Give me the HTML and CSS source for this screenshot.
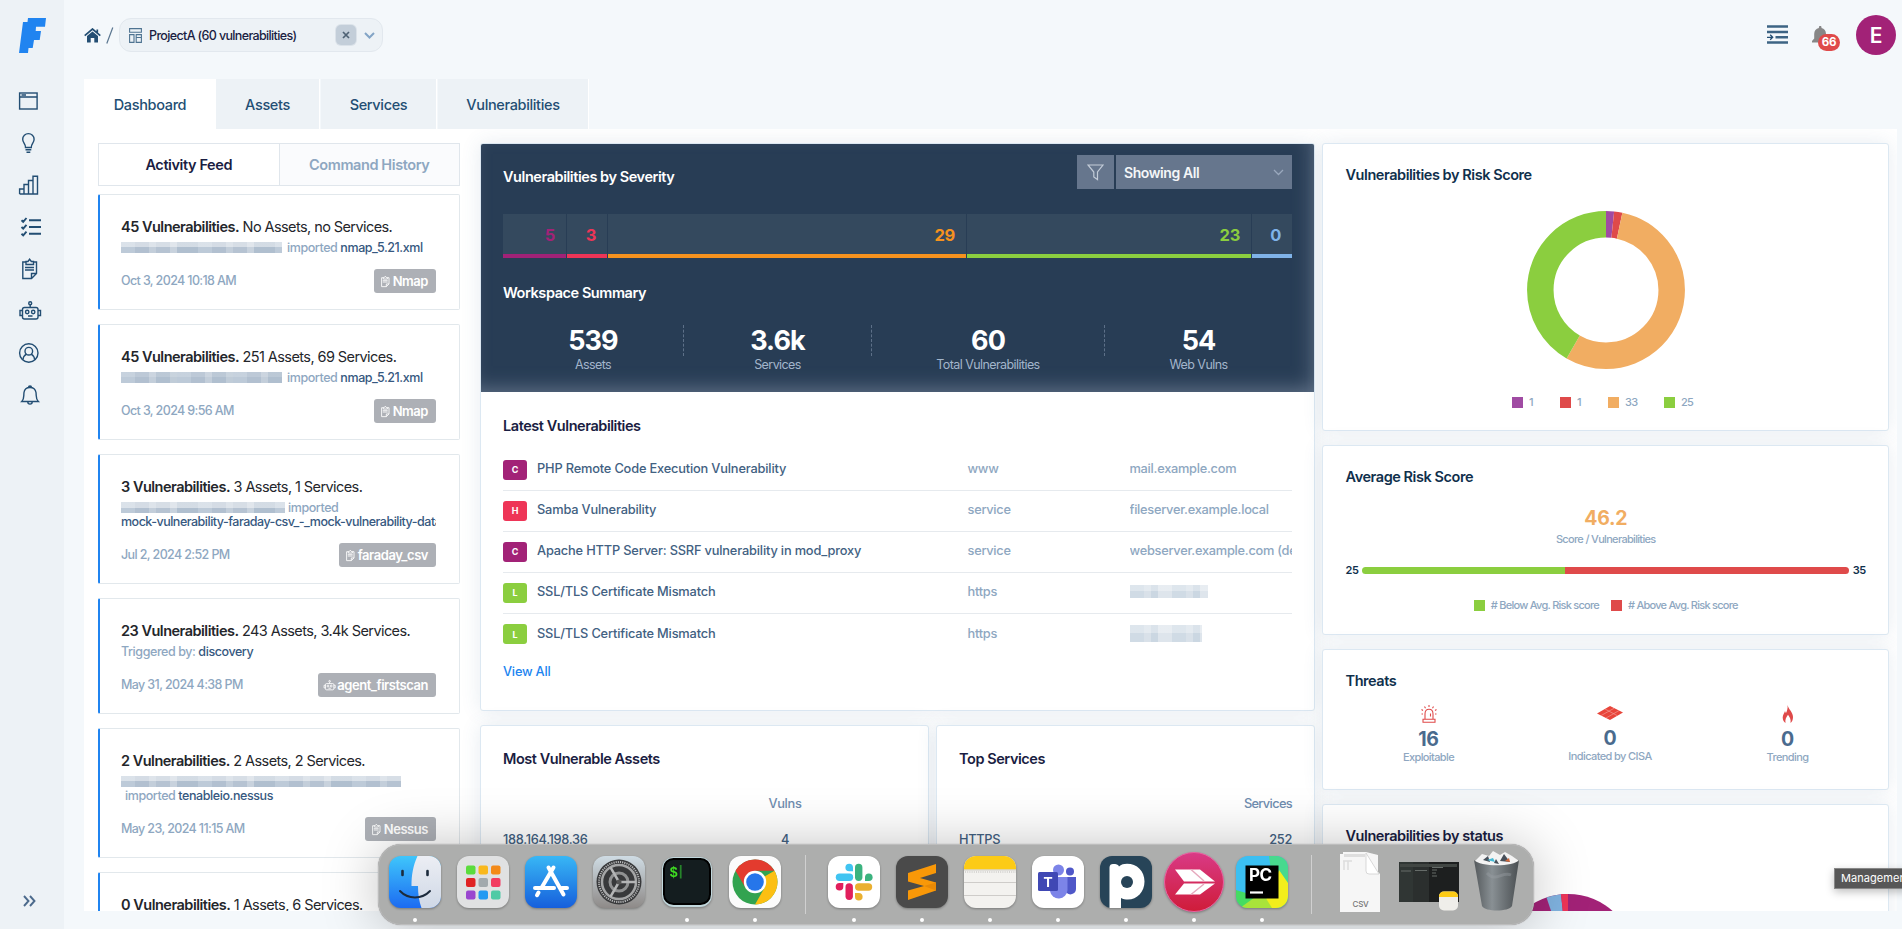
FILE: index.html
```html
<!DOCTYPE html>
<html lang="en">
<head>
<meta charset="utf-8">
<title>Faraday Dashboard</title>
<link rel="stylesheet" href="styles.css">
</head>
<body>
<svg class="defs" width="0" height="0">
  <defs>
    <symbol id="clip" viewBox="0 0 24 24"><path d="M8 5H4.800V21.500H13.500L18.500 16.500V5H15.500M13.500 21.500V16.500H18.500M8 7.500V4.500H10L11.600 2.200L13.300 4.500H15.500V7.500ZM7 10.500H16M7 13H16"/></symbol>
    <symbol id="bot" viewBox="0 0 24 24"><rect x="4.500" y="8.500" width="15.500" height="11.500" rx="2"/><path d="M12.200 8.500V6M4.500 11.500H2V16.500H4.500M20 11.500H22.500V16.500H20M10 17H14.500"/><circle cx="12.200" cy="4.200" r="1.500"/><circle cx="9.200" cy="13" r="1.700"/><circle cx="15.200" cy="13" r="1.700"/></symbol>
  </defs>
</svg>
<div class="app">
  <aside class="sidebar">
    <svg class="logo" width="27" height="35" viewBox="0 0 27 35"><path d="M9 0H27L26 8.700H17L16.700 13H22L20.700 22H15L13.700 30H9.500L9 35H0L4 4H8.500Z" fill="#2084f0"/></svg>
    <nav class="side-nav">
      <svg class="si" viewBox="0 0 24 24"><rect x="1.600" y="4" width="17.500" height="16"/><path d="M1.600 8H19.100M3.500 6H8" /></svg>
      <svg class="si" viewBox="0 0 24 24"><path d="M7.500 16.500C7.500 12.500 4.700 12 4.700 8.300A5.700 5.700 0 0 1 16.100 8.300C16.100 12 13.300 12.500 13.300 16.500ZM7.500 18.800H13.300M8.500 21.200H12.300"/></svg>
      <svg class="si" viewBox="0 0 24 24"><path d="M1.600 21V16H6V21M6 21V11.500H10.500V21M10.500 21V7.500H15V21M15 21V3.200H19.500V21ZM1.600 21H15"/></svg>
      <svg class="si" viewBox="0 0 24 24"><path d="M11 5.200H23M11 12H23M11 18.800H23M3.500 5.200L5.200 6.800L8.500 3M3.500 12L5.200 13.600L8.500 9.800M3.500 18.800L5.200 20.400L8.500 16.600" stroke-width="1.900"/></svg>
      <svg class="si"><use href="#clip"/></svg>
      <svg class="si"><use href="#bot"/></svg>
      <svg class="si" viewBox="0 0 24 24"><circle cx="10.800" cy="12" r="9.200"/><circle cx="10.800" cy="10.200" r="3.800"/><path d="M4.900 18.800C5.200 15.500 7 14 8.500 13.200M16.700 18.800C16.400 15.500 14.600 14 13.100 13.200"/></svg>
      <svg class="si" viewBox="0 0 24 24"><path d="M3.800 18.500C6.500 16 5.500 13 6 9.500C6.400 6.500 8.500 4.500 12 4.500C15.500 4.500 17.500 6.500 18 9.500C18.500 13 17.500 16 20.300 18.500ZM10.500 4.500C10.500 2.500 13.500 2.500 13.500 4.500M9.800 19C9.800 21.800 14.200 21.800 14.200 19"/></svg>
    </nav>
    <svg class="expand" width="13" height="12" viewBox="0 0 13 12"><path d="M1 1L5.500 6L1 11M7 1L11.500 6L7 11"/></svg>
  </aside>

  <main class="main">
    <header class="topbar">
      <svg class="home" width="17" height="15" viewBox="0 0 17 15"><path d="M.7 7.700L8.500 1L16.300 7.700M13.300 1.500V4.500" fill="none" stroke="#234e73" stroke-width="1.700"/><path d="M3 8L8.500 3.400L14 8V14.500H10.300V10H6.700V14.500H3Z" fill="#234e73"/></svg>
      <svg class="slash" width="8" height="17" viewBox="0 0 8 17"><path d="M.8 16.500L6.800.5" stroke="#5a7690" stroke-width="1.200"/></svg>
      <div class="picker">
        <svg width="13" height="15" viewBox="0 0 13 15"><path d="M.6.600H12.400V4.200H.6ZM.6 6.600H5V14.400H.6ZM7.200 14.400V9.500H12.400V14.400ZM7.200 9.500V6.600H12.400V9.500" fill="none" stroke="#4e7391" stroke-width="1.100"/></svg>
        <span class="t-project">ProjectA (60 vulnerabilities)</span>
        <span class="clear"><svg width="8" height="8" viewBox="0 0 8 8"><path d="M1 1L7 7M7 1L1 7" stroke="#4f6274" stroke-width="1.700"/></svg></span>
        <svg width="11" height="7" viewBox="0 0 11 7"><path d="M1 1L5.500 5.500L10 1" fill="none" stroke="#83a4c6" stroke-width="2"/></svg>
      </div>
      <div class="tools">
        <svg class="indent" width="21" height="19" viewBox="0 0 21 19"><path d="M0 1.500H21M0 7H21M8.500 12.300H21M0 17.500H21" stroke="#3d6484" stroke-width="2.400"/><path d="M0 12.300H5.500M3.200 9.800L5.700 12.300L3.200 14.800" fill="none" stroke="#234e73" stroke-width="1.300"/></svg>
        <div class="bellwrap">
          <svg width="16" height="17" viewBox="0 0 16 17"><path d="M0 16.500V15L2.200 12.500V8C2.200 4.500 4 2.600 6.900 2V1.200A1.300 1.300 0 0 1 9.500 1.200V2C12.300 2.600 14 4.500 14 8V12.500L16 15V16.500Z" fill="#878787"/></svg>
          <span class="badge">66</span>
        </div>
        <span class="avatar">E</span>
      </div>
    </header>

    <nav class="tabs">
      <span class="tab on">Dashboard</span><span class="tab t2">Assets</span><span class="tab t3">Services</span><span class="tab t4">Vulnerabilities</span>
    </nav>

    <section class="board">
      <div class="feed">
        <div class="feed-tabs"><span class="ft on">Activity Feed</span><span class="ft">Command History</span></div>
        <article class="item">
          <p class="it"><b>45 Vulnerabilities.</b> No Assets, no Services.</p>
          <p class="by"><i class="px w1"></i><span>imported</span> <em>nmap_5.21.xml</em></p>
          <div class="foot"><span>Oct 3, 2024 10:18 AM</span><span class="tag"><svg><use href="#clip"/></svg>Nmap</span></div>
        </article>
        <article class="item">
          <p class="it"><b>45 Vulnerabilities.</b> 251 Assets, 69 Services.</p>
          <p class="by"><i class="px w1 dim"></i><span>imported</span> <em>nmap_5.21.xml</em></p>
          <div class="foot"><span>Oct 3, 2024 9:56 AM</span><span class="tag"><svg><use href="#clip"/></svg>Nmap</span></div>
        </article>
        <article class="item tall">
          <p class="it"><b>3 Vulnerabilities.</b> 3 Assets, 1 Services.</p>
          <p class="by"><i class="px w2"></i><span>imported</span><br><em class="long">mock-vulnerability-faraday-csv_-_mock-vulnerability-data</em></p>
          <div class="foot"><span>Jul 2, 2024 2:52 PM</span><span class="tag"><svg><use href="#clip"/></svg>faraday_csv</span></div>
        </article>
        <article class="item">
          <p class="it"><b>23 Vulnerabilities.</b> 243 Assets, 3.4k Services.</p>
          <p class="by"><span>Triggered by:</span> <em>discovery</em></p>
          <div class="foot"><span>May 31, 2024 4:38 PM</span><span class="tag"><svg><use href="#bot"/></svg>agent_firstscan</span></div>
        </article>
        <article class="item tall">
          <p class="it"><b>2 Vulnerabilities.</b> 2 Assets, 2 Services.</p>
          <p class="by"><i class="px w3"></i><br><span class="ind">imported</span> <em>tenableio.nessus</em></p>
          <div class="foot"><span>May 23, 2024 11:15 AM</span><span class="tag"><svg><use href="#clip"/></svg>Nessus</span></div>
        </article>
        <article class="item">
          <p class="it"><b>0 Vulnerabilities.</b> 1 Assets, 6 Services.</p>
        </article>
      </div>

      <div class="center">
        <section class="card sev-card">
          <div class="dark">
            <div class="dark-head">
              <h2>Vulnerabilities by Severity</h2>
              <div class="filter">
                <span class="funnel"><svg width="17" height="17" viewBox="0 0 17 17"><path d="M1 1H16L10.500 8V15.500L6.800 13V8Z" fill="none" stroke="#c3ccd8" stroke-width="1.200"/></svg></span>
                <span class="select">Showing All<svg width="11" height="7" viewBox="0 0 11 7"><path d="M1 1L5.500 5.500L10 1" fill="none" stroke="#9aa8bd" stroke-width="1.300"/></svg></span>
              </div>
            </div>
            <div class="sev">
              <span class="crit">5</span><span class="high">3</span><span class="med">29</span><span class="low">23</span><span class="info">0</span>
            </div>
            <h2 class="ws">Workspace Summary</h2>
            <div class="summary">
              <div class="s1"><b>539</b><span>Assets</span></div>
              <div class="s2"><b>3.6k</b><span>Services</span></div>
              <div class="s3"><b>60</b><span>Total Vulnerabilities</span></div>
              <div class="s4"><b>54</b><span>Web Vulns</span></div>
            </div>
          </div>
          <div class="latest">
            <h2>Latest Vulnerabilities</h2>
            <div class="row"><i class="sq c">C</i><span class="name">PHP Remote Code Execution Vulnerability</span><span>www</span><span class="host">mail.example.com</span></div>
            <div class="row"><i class="sq h">H</i><span class="name">Samba Vulnerability</span><span>service</span><span class="host">fileserver.example.local</span></div>
            <div class="row"><i class="sq c">C</i><span class="name">Apache HTTP Server: SSRF vulnerability in mod_proxy</span><span>service</span><span class="host">webserver.example.com (default)</span></div>
            <div class="row"><i class="sq l">L</i><span class="name">SSL/TLS Certificate Mismatch</span><span>https</span><span class="host"><i class="mosaic m1"></i></span></div>
            <div class="row last"><i class="sq l">L</i><span class="name">SSL/TLS Certificate Mismatch</span><span>https</span><span class="host"><i class="mosaic m2"></i></span></div>
            <a class="view">View All</a>
          </div>
        </section>
        <div class="pair">
          <section class="card mva">
            <h2>Most Vulnerable Assets</h2>
            <div class="mrow head"><span></span><span>Vulns</span></div>
            <div class="mrow"><span>188.164.198.36</span><span>4</span></div>
          </section>
          <section class="card top-s">
            <h2>Top Services</h2>
            <div class="trow head"><span></span><span class="sv">Services</span></div>
            <div class="trow"><span>HTTPS</span><span>252</span></div>
          </section>
        </div>
      </div>

      <div class="right">
        <section class="card risk">
          <h2>Vulnerabilities by Risk Score</h2>
          <svg class="donut" width="158" height="158" viewBox="-79 -79 158 158">
            <g fill="none" stroke-width="26.500" transform="rotate(-90)">
              <circle r="65.700" pathLength="60" stroke="#a04ba3" stroke-dasharray="1 59"/>
              <circle r="65.700" pathLength="60" stroke="#df4a4a" stroke-dasharray="1 59" stroke-dashoffset="-1"/>
              <circle r="65.700" pathLength="60" stroke="#f1ad62" stroke-dasharray="33 27" stroke-dashoffset="-2"/>
              <circle r="65.700" pathLength="60" stroke="#8bce3f" stroke-dasharray="25 35" stroke-dashoffset="-35"/>
            </g>
          </svg>
          <div class="legend"><span class="k1"><i class="purple"></i>1</span><span class="k1"><i class="red"></i>1</span><span class="k2"><i class="orange"></i>33</span><span class="k3"><i class="green"></i>25</span></div>
        </section>
        <section class="card avg">
          <h2>Average Risk Score</h2>
          <b class="score">46.2</b>
          <span class="score-l">Score / Vulnerabilities</span>
          <div class="meter"><b>25</b><div class="track"><i class="below"></i><i class="above"></i></div><b>35</b></div>
          <div class="legend2"><i class="green"></i><span># Below Avg. Risk score</span><i class="red"></i><span># Above Avg. Risk score</span></div>
        </section>
        <section class="card threats">
          <h2>Threats</h2>
          <div class="trio">
            <div class="th1"><svg width="16" height="18" viewBox="0 0 16 18"><path d="M4 14V9C4 5.500 5.500 4.300 8 4.300C10.500 4.300 12 5.500 12 9V14M2 17.300V14.300H14V17.300ZM8 0V2M3.500 1.500L4.500 3.200M12.500 1.500L11.500 3.200M.5 4.500L2 5.500M15.500 4.500L14 5.500M.5 9H2M14 9H15.500M9.500 8.500V11.500" fill="none" stroke="#df4a4a" stroke-width="1.100"/></svg><b>16</b><span>Exploitable</span></div>
            <div class="th2"><svg width="26" height="14" viewBox="0 0 26 14"><path d="M13 0L26 6.500L13 14L0 7.500Z" fill="#e8453a"/><path d="M4 9.600L17 2.300M9 12L22 4.600M8 3L20 9.500" stroke="#f5a59f" stroke-width=".6"/></svg><b>0</b><span>Indicated by CISA</span></div>
            <div class="th3"><svg width="12" height="18" viewBox="0 0 12 18"><path d="M5.500 0C6.500 4.500 11 7 11 12C11 15 10 17 8.500 18C9.300 14.500 7.500 12 6 9.800C4.500 12 2.800 14.500 3.500 18C1.800 17 .7 15 .7 12.500C.7 10 2.500 8 3 6C3.300 7 3.600 7.600 4 8C5 6 6 3.500 5.500 0Z" fill="#df4a4a"/></svg><b>0</b><span>Trending</span></div>
          </div>
        </section>
        <section class="card status">
          <h2>Vulnerabilities by status</h2>
          <svg class="pie" width="134" height="134" viewBox="-67 -67 134 134"><circle r="67" fill="#a22277"/><path d="M0 0L-21.500 -63.500A67 67 0 0 1 -7 -66.700Z" fill="#80b3e0"/><path d="M0 0L-7 -66.700A67 67 0 0 1 0 -67Z" fill="#ee3557"/></svg>
        </section>
      </div>
    </section>
  </main>
</div>

<span class="tooltip">Management</span>

<div class="dock">
  <div class="app-i on"><svg viewBox="0 0 52 52"><defs><linearGradient id="gf" x2="0" y2="1"><stop stop-color="#3fc6fb"/><stop offset="1" stop-color="#1c6bf2"/></linearGradient><linearGradient id="gw" x2="0" y2="1"><stop stop-color="#eceef4"/><stop offset="1" stop-color="#cfd8e6"/></linearGradient></defs><rect width="52" height="52" rx="12" fill="url(#gf)"/><path d="M28.500 0C24 10 22.500 19 22.500 30H29C29 38 30 45 32.500 52H40A12 12 0 0 0 52 40V12A12 12 0 0 0 40 0Z" fill="url(#gw)"/><path d="M13.500 15V19M38.500 15V19" stroke="#1c2b3c" stroke-width="2.600" stroke-linecap="round"/><path d="M11 35C19 43.500 33 43.500 41 35" fill="none" stroke="#1c2b3c" stroke-width="2" stroke-linecap="round"/></svg></div>
  <div class="app-i"><svg viewBox="0 0 52 52"><rect width="52" height="52" rx="12" fill="#e0e1e2"/><g><rect x="9" y="9.500" width="9.500" height="9" rx="2" fill="#5bdc3c"/><rect x="21.500" y="9.500" width="9.500" height="9" rx="2" fill="#f9b81c"/><rect x="34" y="9.500" width="9.500" height="9" rx="2" fill="#f38a18"/><rect x="9" y="22" width="9.500" height="9" rx="2" fill="#e02323"/><rect x="21.500" y="22" width="9.500" height="9" rx="2" fill="#a1a9ad"/><rect x="34" y="22" width="9.500" height="9" rx="2" fill="#f23b60"/><rect x="9" y="34.500" width="9.500" height="9" rx="2" fill="#9a46cf"/><rect x="21.500" y="34.500" width="9.500" height="9" rx="2" fill="#239af2"/><rect x="34" y="34.500" width="9.500" height="9" rx="2" fill="#4fcaa5"/></g></svg></div>
  <div class="app-i"><svg viewBox="0 0 52 52"><defs><linearGradient id="gs" x2="0" y2="1"><stop stop-color="#38b7f5"/><stop offset="1" stop-color="#165fdc"/></linearGradient></defs><rect width="52" height="52" rx="12" fill="url(#gs)"/><path d="M28.500 11.500L17 31M23.500 11.500L38.500 38.500M10 32H29M37 32H42M13.500 36.500L12 39.200" stroke="#fff" stroke-width="4" stroke-linecap="round"/></svg></div>
  <div class="app-i"><svg viewBox="0 0 52 52"><defs><linearGradient id="gg" x2="0" y2="1"><stop stop-color="#cfdce4"/><stop offset="1" stop-color="#8e8a88"/></linearGradient></defs><rect width="52" height="52" rx="12" fill="url(#gg)"/><circle cx="26" cy="26" r="22.500" fill="#38393b"/><circle cx="26" cy="26" r="20" fill="none" stroke="#b4b5b6" stroke-width="2" stroke-dasharray="1.200 1"/><circle cx="26" cy="26" r="17" fill="none" stroke="#a5a6a7" stroke-width="2.500"/><circle cx="26" cy="26" r="9" fill="none" stroke="#909192" stroke-width="3"/><path d="M26 26H43M26 26L17.500 11.300M26 26L17.500 40.700" stroke="#b4b5b6" stroke-width="2.500"/><circle cx="26" cy="26" r="2.500" fill="#555"/></svg></div>
  <div class="app-i on"><svg viewBox="0 0 52 52"><rect x="1" y="1" width="50" height="50" rx="12" fill="#c1d7dc"/><rect x="2" y="2" width="48" height="47" rx="10.500" fill="#000"/><rect x="4" y="4" width="44" height="43" rx="8.500" fill="#141d1f"/><path d="M19.700 9V22.500" stroke="#26842a" stroke-width="1.800"/><text x="8.500" y="20.500" class="term">$</text></svg></div>
  <div class="app-i on"><svg viewBox="0 0 52 52"><rect width="52" height="52" rx="12" fill="#fbfbfb"/><circle cx="26" cy="26" r="22.500" fill="#32a350"/><path d="M26 26L45.500 14.800A22.500 22.500 0 0 1 26 48.500L35.700 31.600Z" fill="#fcbf12"/><path d="M6.500 14.800A22.500 22.500 0 0 1 45.500 14.800H26L16.300 31.600Z" fill="#e33b2e"/><circle cx="26" cy="26" r="11.200" fill="#fff"/><circle cx="26" cy="26" r="8.800" fill="#2676ea"/></svg></div>
  <i class="sep a"></i>
  <div class="app-i on"><svg viewBox="0 0 52 52"><rect width="52" height="52" rx="12" fill="#fff"/><g stroke-width="7.400" stroke-linecap="round"><path d="M21.500 21.200H11.500" stroke="#40c4f1"/><path d="M30.700 11.500V21.300" stroke="#3bb37f"/><path d="M30.700 31H40.500" stroke="#eab030"/><path d="M21.200 31V40.300" stroke="#e11f5c"/></g><path d="M25 15.300H21.200A3.800 3.800 0 1 1 25 11.500Z" fill="#40c4f1"/><path d="M37 25V21.200A3.800 3.800 0 1 1 40.800 25Z" fill="#3bb37f"/><path d="M27 37H30.800A3.800 3.800 0 1 1 27 40.800Z" fill="#eab030"/><path d="M15.300 27V30.800A3.800 3.800 0 1 1 11.500 27Z" fill="#e11f5c"/></svg></div>
  <div class="app-i on"><svg viewBox="0 0 52 52"><rect width="52" height="52" rx="12" fill="#4a4a4a"/><path d="M12 17L40 8V17L24 22L40 26.500V34.500L12 44V34.500L28 30L12 25.500Z" fill="#f99808"/><path d="M28 30L40 26.500V34.500Z" fill="#e88906"/></svg></div>
  <div class="app-i on"><svg viewBox="0 0 52 52"><rect width="52" height="52" rx="12" fill="#f3f2ef"/><path d="M0 13.500V12A12 12 0 0 1 12 0H40A12 12 0 0 1 52 12V13.500Z" fill="#fccb16"/><path d="M0 14H52M0 26.500H52M0 39.500H52" stroke="#c9c7c4" stroke-width=".9"/><path d="M1 16H52" stroke="#b9b8b5" stroke-width="1" stroke-dasharray="1 1.200"/></svg></div>
  <div class="app-i on"><svg viewBox="0 0 52 52"><rect width="52" height="52" rx="12" fill="#fff"/><circle cx="38" cy="15.500" r="4" fill="#4f57c8"/><path d="M34 21H44V33A5.500 5.500 0 0 1 34 36Z" fill="#4f57c8"/><circle cx="26.500" cy="14" r="5.500" fill="#7c84e8"/><path d="M18 21H35.500V34A8.800 8.800 0 0 1 18 35Z" fill="#7c84e8"/><rect x="6" y="16" width="20" height="19" rx="1.500" fill="#4048b4"/><text x="16" y="31" class="teams">T</text></svg></div>
  <div class="app-i on"><svg viewBox="0 0 52 52"><rect width="52" height="52" rx="12" fill="#274458"/><path d="M9.500 52V11.500C9.500 9 11 8 13 8C16 8 18.500 8.500 19 10.500C21 8.500 24 7.800 27 7.800C37 7.800 44.500 15 44.500 25.500C44.500 36 37 43.500 28 43.500C25.500 43.500 23 43 21 42V52Z" fill="#fff"/><circle cx="27" cy="26" r="6" fill="#274458"/></svg></div>
  <div class="app-i on big"><svg viewBox="0 0 60 60"><defs><linearGradient id="gk" x2="0" y2="1"><stop stop-color="#d93a86"/><stop offset="1" stop-color="#cf1c39"/></linearGradient></defs><circle cx="30" cy="30" r="29.500" fill="url(#gk)" stroke="#e961a0"/><path d="M11 17.500H36L51 29.500H20L11 17.500Z" fill="#fff"/><path d="M11 42.500H36L51 31.500H20L11 42.500Z" fill="#fff"/><path d="M27 17.500L40 29M27 42.500L40 32" stroke="#e6a9bd" stroke-width="1.500"/></svg></div>
  <div class="app-i on"><svg viewBox="0 0 52 52"><defs><clipPath id="cp"><rect width="52" height="52" rx="12"/></clipPath></defs><g clip-path="url(#cp)"><rect width="52" height="52" fill="#3bbff2"/><path d="M33 0H52V52H40Z" fill="#47d98e"/><path d="M0 34L20 40V52H0Z" fill="#45dc62"/><path d="M16 52L34 40L43 14L52 27V52Z" fill="#f2ee1c"/><path d="M4 52L26 36L36 52Z" fill="#a9e33a"/></g><rect x="9.500" y="9.500" width="33" height="33" fill="#000"/><text x="13" y="25" class="pc">PC</text><path d="M14 36.500H27" stroke="#fff" stroke-width="2.200"/></svg></div>
  <i class="sep b"></i>
  <svg class="csv" width="41" height="60" viewBox="0 0 41 60"><path d="M0 2H3V0H26L38 3V20L40 22V60H0Z" fill="#f6f6f6"/><path d="M4 2H25V5H4Z" fill="#dedede"/><path d="M26 1L39 22H29Q26 22 26 19Z" fill="#fff" stroke="#cfcfcf" stroke-width=".8"/><path d="M4 9V18M8 9V18M3 9H12" stroke="#ddd" stroke-width="1.500"/><text x="20.500" y="55" class="csvt">CSV</text></svg>
  <svg class="win" width="60" height="54" viewBox="0 0 60 54"><rect width="60" height="40" fill="#1d1f1f"/><rect width="30" height="40" fill="#303634"/><rect x="14" width="16" height="40" fill="#2b2f2e"/><path d="M1 3.500H58" stroke="#414643" stroke-width="3"/><path d="M2 9H12M16 8.500H28M33 5.500H44M33 8H38M33 11H37M33 14H38" stroke="#666c69" stroke-width="1.200"/><rect x="40" y="29.500" width="19" height="19" rx="5" fill="#efeeea"/><path d="M40 35V34Q40.500 29.500 45 29.500H54Q58.500 29.500 59 34V35Z" fill="#fccb16"/></svg>
  <svg class="trash" width="46" height="60" viewBox="0 0 46 60"><defs><linearGradient id="gt"><stop stop-color="#54595c"/><stop offset=".4" stop-color="#899094"/><stop offset="1" stop-color="#4a4f52"/></linearGradient></defs><path d="M1 10L8 3L15 5L19 0L26 4L31 1L38 5L45 10L38 15H8Z" fill="#f3f3f3"/><path d="M9 9L14 5L16 11ZM26 10L30 3L36 11ZM20 12L22 8L25 13Z" fill="#48505a"/><path d="M13 9L19 7L21 11Z" fill="#45b9d4"/><path d="M31 10L35 7L36 11Z" fill="#d3683c"/><path d="M0 9C6 16 40 16 45 9L38 55C35 61 11 61 8 55Z" fill="url(#gt)"/><path d="M13 22C22 32 28 20 37 24" fill="none" stroke="#9ba1a4" stroke-width="3" opacity=".4"/></svg>
</div>
</body>
</html>
```
FILE: styles.css
```css
* { box-sizing: border-box; }
body { margin: 0; width: 1902px; height: 929px; overflow: hidden; position: relative; background: #f4f8fb; font-family: Inter, "Liberation Sans", sans-serif; color: #1a1d42; letter-spacing: -0.3px; }
p, h2 { margin: 0; }
i, em { font-style: normal; }
.defs { position: absolute; }
.app { display: flex; height: 929px; }

/* sidebar */
.sidebar { width: 64px; background: #edf2f6; display: flex; flex-direction: column; align-items: flex-start; padding: 18px 0 22px 18px; }
.logo { margin-left: 1px; flex: none; }
.side-nav { display: flex; flex-direction: column; gap: 18px; margin-top: 35.500px; }
.si { width: 24px; height: 24px; fill: none; stroke: #234e73; stroke-width: 1.400; }
.expand { margin: auto 0 0 5px; fill: none; stroke: #4c6a8c; stroke-width: 1.900; }

/* header */
.main { flex: 1; padding-left: 20px; display: flex; flex-direction: column; min-width: 0; }
.topbar { display: flex; align-items: center; height: 79px; padding: 0 6px 9px 0; }
.slash { margin-left: 5px; }
.picker { margin-left: 5px; width: 264px; height: 34px; border: 1px solid #e2e8ee; border-radius: 12px; background: #edf2f6; display: flex; align-items: center; padding: 0 7px 0 9px; }
.t-project { font-size: 12.500px; font-weight: 500; margin-left: 7px; flex: 1; letter-spacing: -0.640px; white-space: nowrap; }
.clear { width: 20px; height: 20px; border-radius: 5px; background: #c3ced9; box-shadow: 0 0 0 1px #dbe2e9; display: grid; place-items: center; margin-right: 8px; }
.tools { margin-left: auto; display: flex; align-items: center; }
.bellwrap { position: relative; margin-left: 24px; width: 44px; height: 26px; padding-top: 4px; }
.badge { position: absolute; left: 6px; top: 12px; width: 22px; height: 17px; border-radius: 9px; background: #df4a4a; color: #fff; font-size: 11.500px; font-weight: 700; text-align: center; line-height: 17px; }
.indent { margin-top: -2px; }
.avatar { width: 40px; height: 40px; border-radius: 50%; background: #a22277; color: #fff; font-size: 21px; font-weight: 600; display: grid; place-items: center; }

/* tabs */
.tabs { display: flex; gap: 2px; height: 50px; flex: none; }
.tab { background: #edf2f6; color: #234e73; font-size: 14.500px; font-weight: 500; display: grid; place-items: center; width: 103px; letter-spacing: -0.350px; box-shadow: 1px 0 0 #fff; padding-top: 1px; }
.tab.on { background: #fff; width: 132px; margin-right: -2px; }
.tab.t3 { width: 115px; }
.tab.t4 { width: 150px; }

/* board */
.board { width: 1813px; height: 782px; flex: none; background: #fff; padding: 14px 8px 0 14px; display: flex; overflow: hidden; }
.feed { width: 362px; flex: none; }
.feed-tabs { display: flex; height: 43px; border: 1px solid #e0e6ec; margin-bottom: 8px; }
.ft { flex: 1; display: grid; place-items: center; font-size: 14.500px; font-weight: 600; color: #8ea7c1; background: #fafbfd; border-left: 1px solid #e0e6ec; letter-spacing: -0.400px; }
.ft.on { color: #1a1d42; background: #fff; border: 0; }
.item { height: 116px; border: 1px solid #e2e8ec; border-left: 2px solid #2084f0; border-radius: 2px; margin-bottom: 14px; padding: 22px 23px 0 21px; display: flex; flex-direction: column; }
.item.tall { height: 130px; }
.it { font-size: 14.500px; line-height: 20px; color: #24262b; letter-spacing: -0.580px; white-space: nowrap; }
.it b { font-weight: 600; letter-spacing: -0.500px; }
.by { font-size: 12.500px; line-height: 14px; margin-top: 3.500px; font-weight: 550; color: #8ea7c1; white-space: nowrap; overflow: hidden; letter-spacing: -0.420px; height: 16px; }
.tall .by { height: 30px; }
.by em { color: #365880; }
.by .long { letter-spacing: -0.500px; }
.ind { margin-left: 4px; }
.px { display: inline-block; height: 11px; width: 161px; margin-right: 5px; vertical-align: -1px; background: linear-gradient(rgba(255, 255, 255, .45) 50%, transparent 50%), repeating-linear-gradient(90deg, #bdcad8 0 14px, #b2c0d0 14px 28px, #c3ceda 28px 35px, #b6c3d2 35px 49px, #c8d2dd 49px 56px, #b0bfcf 56px 77px); }
.px.dim { background: linear-gradient(rgba(255, 255, 255, .15) 50%, transparent 50%), repeating-linear-gradient(90deg, #bdcad8 0 14px, #b2c0d0 14px 28px, #c3ceda 28px 35px, #b0bfcf 35px 49px, #c0ccd8 49px 56px); }
.px.w2 { width: 164px; margin-right: 3px; }
.px.w3 { width: 280px; }
.foot { display: flex; justify-content: space-between; align-items: flex-start; font-size: 12.500px; font-weight: 550; color: #8ea7c1; margin-top: 12.500px; line-height: 24px; letter-spacing: -0.620px; }
.tag { background: #adb0b6; color: #fff; border-radius: 3px; padding: 0 8px 0 5px; display: flex; align-items: center; font-weight: 600; height: 24px; font-size: 13px; letter-spacing: -0.450px; }
.tag svg { width: 13px; height: 13px; margin-right: 1px; fill: none; stroke: #fff; stroke-width: 1.600; }

/* cards */
.card { background: #fff; border: 1px solid #dce8f2; border-radius: 3px; box-shadow: 0 0 20px rgba(60, 95, 140, .12); }
h2 { font-size: 14.500px; line-height: 20px; font-weight: 600; letter-spacing: -0.440px; }
.center { width: 835px; margin-left: 20px; flex: none; }
.sev-card { height: 567.500px; }
.dark { height: 248px; background: #283d55; padding: 11px 22px 0 22px; color: #fff; box-shadow: inset -6px -8px 20px -6px #66768c; border-radius: 2px 2px 0 0; }
.dark-head { display: flex; justify-content: space-between; }
.dark-head h2 { margin-top: 12px; }
.filter { display: flex; gap: 2px; height: 34px; }
.funnel { width: 37px; background: #66768d; display: grid; place-items: center; }
.select { width: 176px; background: #66768d; display: flex; align-items: center; justify-content: space-between; padding: 0 8px; font-size: 14px; font-weight: 600; letter-spacing: -0.420px; color: #f4f6f8; }
.sev { display: flex; gap: 1px; margin-top: 25px; height: 44px; font-size: 16.500px; font-weight: 700; }
.sev span { background: #34495e; border-bottom: 4px solid; text-align: right; padding-right: 11px; line-height: 42px; }
.crit { color: #a22277; width: 63px; }
.high { color: #ee3557; width: 40px; }
.med { color: #f6921e; width: 358px; }
.low { color: #8bce3f; width: 284px; }
.info { color: #80b3e8; flex: 1; }
.ws { margin-top: 25px; }
.summary { display: flex; margin-top: 22px; text-align: center; }
.summary div { display: flex; flex-direction: column; height: 31px; border-left: 1px dashed #5d7088; }
.summary .s1 { width: 180px; border: 0; }
.s2 { width: 188px; }
.s3 { width: 233px; }
.s4 { flex: 1; }
.summary b { font-size: 27px; line-height: 32px; font-weight: 700; letter-spacing: -0.900px; }
.summary span { font-size: 12.500px; line-height: 15px; color: #a3b5cb; letter-spacing: -0.580px; }
.latest { padding: 23.500px 22px 0 22px; }
.latest h2 { margin-bottom: 14px; }
.row { height: 41px; border-bottom: 1px solid #e6eaee; display: grid; grid-template-columns: 34px 430.500px 162px 162.500px; align-items: center; font-size: 12.800px; font-weight: 550; color: #8ea7c1; letter-spacing: -0.260px; white-space: nowrap; }
.row.last { border: 0; }
.name { color: #426182; letter-spacing: -0.170px; }
.row span { position: relative; top: -1px; }
.host { overflow: hidden; }
.sq { width: 24px; height: 20px; border-radius: 3px; color: #fff; font-size: 9px; font-weight: 700; display: grid; place-items: center; }
.c { background: #a22277; }
.h { background: #ee3557; }
.l { background: #8bce3f; }
.mosaic { display: block; width: 78px; height: 13px; background: linear-gradient(rgba(255, 255, 255, .3) 50%, transparent 50%), repeating-linear-gradient(90deg, #d0dbe5 0 14px, #d9e1e9 14px 21px, #cbd7e2 21px 28px, #dee5ec 28px 42px); }
.m2 { height: 17px; width: 72px; }
.view { display: block; color: #2084f0; font-size: 12.800px; font-weight: 550; line-height: 18px; margin-top: 8px; letter-spacing: -0.200px; }
.pair { display: grid; grid-template-columns: 449px 379px; gap: 7px; margin-top: 14.500px; }
.pair .card { height: 240px; padding: 23px 22px 0 22px; color: #1a1d42; }
.mrow, .trow { display: grid; grid-template-columns: 240px 84px; font-size: 12.800px; line-height: 20px; font-weight: 550; color: #426182; margin-top: 16px; }
.mrow span + span { text-align: center; }
.trow { display: flex; justify-content: space-between; }
.head { color: #6f8daf; margin-top: 25px; }
.sv { letter-spacing: -0.650px; }

/* right column */
.right { width: 567px; margin-left: 7px; flex: none; }
.right .card { margin-bottom: 14px; padding: 21px 22px 0 22.500px; display: flex; flex-direction: column; color: #10304c; }
.right .risk { height: 288px; }
.donut { align-self: center; margin-top: 26px; flex: none; }
.legend { display: flex; margin: 27px 0 0 166.500px; font-size: 11px; line-height: 12px; color: #8ea7c1; font-weight: 550; letter-spacing: -0.700px; }
.legend span { display: flex; align-items: center; gap: 6px; }
.legend i, .legend2 i { width: 11px; height: 11px; }
.k1 { width: 48px; }
.k2 { width: 56px; }
.purple { background: #a04ba3; }
.red { background: #df4a4a; }
.orange { background: #f1ad62; }
.green { background: #8bce3f; }
.right .avg { height: 190px; align-items: center; }
.avg h2, .threats h2, .status h2 { align-self: flex-start; }
.score { font-size: 19.500px; line-height: 24px; color: #f1ad62; margin-top: 19px; }
.score-l { font-size: 11px; line-height: 14px; color: #8ea7c1; margin-top: 1.500px; letter-spacing: -0.680px; font-weight: 500; }
.meter { align-self: stretch; display: flex; align-items: center; justify-content: space-between; font-size: 11px; line-height: 14px; margin-top: 17.500px; }
.meter b { font-weight: 600; }
.track { width: 487px; height: 7px; border-radius: 4px; overflow: hidden; display: flex; }
.below { width: 203px; background: #8bce3f; }
.above { flex: 1; background: #df4a4a; }
.legend2 { display: flex; align-items: center; margin-top: 21px; font-size: 11px; line-height: 14px; font-weight: 550; color: #8ea7c1; letter-spacing: -0.750px; }
.legend2 span { margin: 0 12px 0 6px; }
.legend2 span:last-child { margin-right: 0; }
.right .threats { height: 141px; }
.trio { display: flex; margin-top: 14px; }
.trio div { display: flex; flex-direction: column; align-items: center; width: 140px; }
.trio svg { height: 18px; }
.th1 { margin-left: 13px; }
.th2 { margin: -1px 37.500px 0 41.500px; }
.trio b { font-size: 19.500px; line-height: 24px; margin-top: 4px; color: #4a6b8e; }
.trio span { font-size: 11px; line-height: 13px; color: #8ea7c1; letter-spacing: -0.600px; font-weight: 500; }
.right .status { height: 240px; color: #1a1d42; }
.pie { flex: none; margin: 48px 0 0 155px; }

/* overlays */
.tooltip { position: absolute; left: 1834px; top: 868px; width: 90px; height: 21px; background: #575757; border: 1px solid #888; color: #fff; font-size: 11px; line-height: 19px; padding-left: 6px; letter-spacing: .05px; box-shadow: 0 3px 8px rgba(0, 0, 0, .25); }
.dock { position: absolute; left: 378px; top: 844px; width: 1156px; height: 81px; border-radius: 23px; background: #adaead; border: 1px solid #bdbdbd; box-shadow: 0 0 1px #777, 0 2px 55px rgba(0, 0, 0, .25); display: flex; align-items: flex-start; padding: 11px 0 0 10px; }
.app-i { position: relative; width: 52px; height: 52px; margin-right: 16px; flex: none; }
.app-i svg { display: block; width: 100%; height: 100%; overflow: visible; filter: drop-shadow(0 1px 1px rgba(0, 0, 0, .3)); }
.app-i.big { width: 60px; height: 60px; margin: -4px 12px 0 -4px; }
.app-i.on::after { content: ""; position: absolute; left: 24px; top: 62px; width: 4px; height: 4px; border-radius: 50%; background: #fff; }
.app-i.big::after { left: 28px; top: 66px; }
.sep { width: 1px; height: 59px; background: #d0d0d0; flex: none; margin-top: -1px; }
.sep.a { margin-left: 8px; margin-right: 22px; }
.sep.b { margin-left: 7px; margin-right: 28px; }
.term { font: 700 14px "Liberation Mono", monospace; fill: #3fdc22; }
.teams { font: 700 14px "Liberation Sans", sans-serif; fill: #fff; text-anchor: middle; }
.pc { font: 700 17px Inter, sans-serif; fill: #fff; letter-spacing: -0.500px; }
.csvt { font: 500 8px Inter, sans-serif; fill: #777; text-anchor: middle; }
.csv { margin-top: -4px; flex: none; }
.win { margin: 6px 15px 0 18px; flex: none; }
.trash { margin-top: -5px; flex: none; }
```
